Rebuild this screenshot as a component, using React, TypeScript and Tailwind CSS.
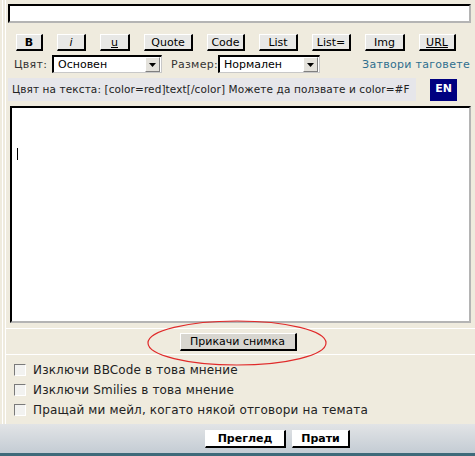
import React from "react";

const tagButtons = [
  { label: "B", w: "w-[27px]", cls: "font-bold" },
  { label: "i", w: "w-[29px]", cls: "italic" },
  { label: "u", w: "w-[30px]", cls: "underline" },
  { label: "Quote", w: "w-[49px]", cls: "" },
  { label: "Code", w: "w-[38px]", cls: "" },
  { label: "List", w: "w-[39px]", cls: "" },
  { label: "List=", w: "w-[39px]", cls: "" },
  { label: "Img", w: "w-[40px]", cls: "" },
  { label: "URL", w: "w-[37px]", cls: "underline" },
];

const options = [
  "Изключи BBCode в това мнение",
  "Изключи Smilies в това мнение",
  "Пращай ми мейл, когато някой отговори на темата",
];

function Select({ value, w }: { value: string; w: string }) {
  return (
    <div
      className={`${w} h-[18px] flex items-center bg-white border-t-2 border-l-2 border-t-black border-l-black border-r border-b border-r-[#c8c8c8] border-b-[#c8c8c8]`}
    >
      <span className="flex-1 pl-[4px] text-[11px] leading-none text-black">{value}</span>
      <div className="w-[15px] h-[15px] mr-[1px] flex items-center justify-center bg-[#e4e2dc] border-t border-l border-t-white border-l-white border-r border-b border-r-[#808080] border-b-[#808080]">
        <svg width="7" height="4" viewBox="0 0 7 4">
          <path d="M0 0h7L3.5 4z" fill="#000" />
        </svg>
      </div>
    </div>
  );
}

export default function App() {
  return (
    <div
      className="relative w-[475px] h-[456px] overflow-hidden bg-[#efebde] text-black"
      style={{ fontFamily: '"DejaVu Sans", Verdana, sans-serif' }}
    >
      {/* table cell edges */}
      <div className="flex h-full">
        <div className="w-[3px] border-r border-r-white" />
        <div className="w-[3px] border-r border-r-white" />
        <div className="flex-1 flex flex-col">
          {/* subject field */}
          <div className="mt-[4px] ml-[2px] w-[463px] h-[19px] bg-white border-t-2 border-l-2 border-t-black border-l-black border-r-2 border-b-2 border-r-[#b4b4b4] border-b-[#b4b4b4]" />

          {/* tag buttons */}
          <div className="mt-[11px] ml-[10px] flex gap-[14px]">
            {tagButtons.map((b) => (
              <div
                key={b.label}
                className={`${b.w} h-[17px] flex items-center justify-center bg-[#e8e8e6] text-[11px] leading-none border-t border-l border-t-white border-l-white border-r-2 border-b-2 border-r-black border-b-black ${b.cls}`}
              >
                {b.label}
              </div>
            ))}
          </div>

          {/* colour / size */}
          <div className="mt-[4px] ml-[8px] flex items-center h-[18px] text-[11px] leading-none text-[#333]">
            <span className="w-[38px] tracking-[0.3px]">Цвят:</span>
            <Select value="Основен" w="w-[110px]" />
            <span className="ml-[9px] w-[47px] tracking-[0.3px]">Размер:</span>
            <Select value="Нормален" w="w-[102px]" />
            <span className="ml-auto mr-[5px] text-[#2e6e8e] tracking-[0.3px]">Затвори таговете</span>
          </div>

          {/* help line */}
          <div className="mt-[5px] ml-[2px] flex items-center">
            <div className="w-[408px] h-[23px] flex items-center pl-[4px] bg-[#e6e6ea] text-[10.5px] tracking-[0.1px] leading-none text-[#222] whitespace-nowrap">
              Цвят на текста: [color=red]text[/color] Можете да ползвате и color=#F
            </div>
            <div className="ml-[14px] w-[27px] h-[22px] flex items-center justify-center bg-[#000080] text-white text-[11px] font-bold">
              EN
            </div>
          </div>

          {/* message textarea */}
          <div className="mt-[5px] ml-[4px] w-[461px] h-[217px] bg-white border-t-2 border-l-2 border-t-black border-l-black border-r-2 border-b-2 border-r-[#b4b4b4] border-b-[#b4b4b4] pl-[5px] pt-[40px]">
            <div className="w-px h-[12px] bg-black" />
          </div>

          {/* attach */}
          <div className="mt-[5px] h-[27px] border-t border-t-white border-b border-b-white flex items-center justify-center">
            <div className="w-[117px] h-[18px] ml-[-5px] flex items-center justify-center bg-[#d8d6d0] text-[11px] leading-none border-t border-l border-t-white border-l-white border-r-2 border-b-2 border-r-black border-b-black">
              Прикачи снимка
            </div>
          </div>

          {/* options */}
          <div className="pt-[8px] flex flex-col gap-[7px]">
            {options.map((o) => (
              <div key={o} className="flex items-center h-[13px] ml-[8px]">
                <div className="w-[12px] h-[12px] bg-[#f2f2f0] border-t border-l border-t-[#7a7a7a] border-l-[#7a7a7a] border-r border-b border-r-white border-b-white" />
                <span className="ml-[7px] text-[12px] leading-none text-[#222] whitespace-nowrap tracking-[0.15px]">{o}</span>
              </div>
            ))}
          </div>
        </div>
      </div>

      {/* bottom bar */}
      <div className="absolute left-0 right-0 bottom-0 h-[32px] bg-gradient-to-b from-[#e2e4e6] to-[#c4ccd4] border-b-[3px] border-b-[#3e6a7a] flex items-center justify-center gap-[6px]">
        <div className="ml-[80px] w-[81px] h-[18px] flex items-center justify-center bg-white text-[11px] font-bold leading-none border-t border-l border-t-white border-l-white border-r-2 border-b-2 border-r-black border-b-black">
          Преглед
        </div>
        <div className="w-[58px] h-[18px] flex items-center justify-center bg-white text-[11px] font-bold leading-none border-t border-l border-t-white border-l-white border-r-2 border-b-2 border-r-black border-b-black">
          Прати
        </div>
      </div>

      {/* red annotation ellipse */}
      <svg className="absolute left-[146px] top-[319px]" width="182" height="48" viewBox="0 0 182 48">
        <ellipse cx="91" cy="24" rx="89" ry="22" fill="none" stroke="#e02a2a" strokeWidth="1.2" />
      </svg>
    </div>
  );
}
